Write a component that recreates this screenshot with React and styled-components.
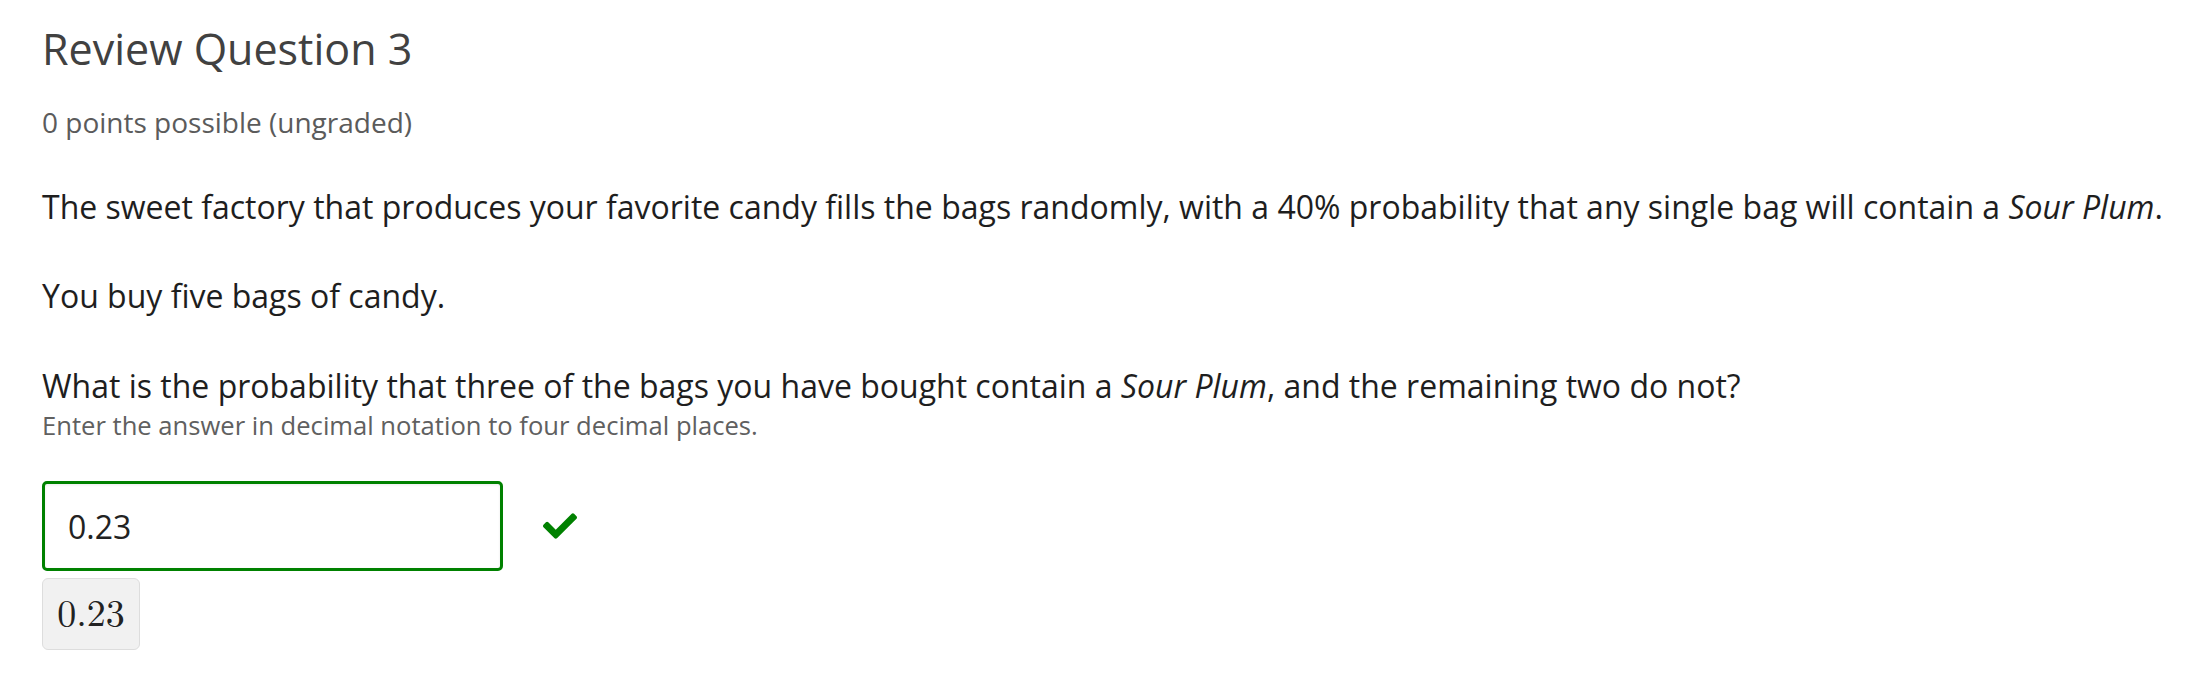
import styled, { createGlobalStyle } from "styled-components";
import { FaCheck } from "react-icons/fa";

const GlobalStyle = createGlobalStyle`
    body {
        margin: 0;
        background: #ffffff;
        font-family: "Open Sans", "Noto Sans", sans-serif;
    }
`

function App() {
    return (
        <>
            <GlobalStyle />
            <DivProblem>
                <H3Title>Review Question 3</H3Title>
                <DivPoints>0 points possible (ungraded)</DivPoints>
                <PText>
                    The sweet factory that produces your favorite candy fills the bags randomly, with a 40% probability that any single bag will contain a <em>Sour Plum</em>.
                </PText>
                <PText>You buy five bags of candy.</PText>
                <LabelQuestion>
                    What is the probability that three of the bags you have bought contain a <em>Sour Plum</em>, and the remaining two do not?
                </LabelQuestion>
                <DivHint>Enter the answer in decimal notation to four decimal places.</DivHint>
                <DivInputRow>
                    <InputAnswer type="text" defaultValue="0.23" />
                    <SpanStatus>
                        <FaCheck size={34} />
                    </SpanStatus>
                </DivInputRow>
                <DivPreview>0.23</DivPreview>
            </DivProblem>
        </>
    );
}

const DivProblem = styled.div`
    padding: 24px 20px 40px 42px;
    color: #1e1e1e;
`

const H3Title = styled.h3`
    margin: 0;
    font-size: 43px;
    line-height: 50px;
    font-weight: 400;
    color: #414141;
`

const DivPoints = styled.div`
    margin-top: 30px;
    font-size: 28px;
    line-height: 36px;
    color: #5b5b5b;
`

const PText = styled.p`
    margin: 45px 0 0 0;
    font-size: 32px;
    line-height: 44px;
`

const LabelQuestion = styled.label`
    display: block;
    margin-top: 46px;
    font-size: 32px;
    line-height: 44px;
`

const DivHint = styled.div`
    font-size: 25.6px;
    line-height: 36px;
    color: #606060;
`

const DivInputRow = styled.div`
    display: flex;
    align-items: center;
    gap: 40px;
    margin-top: 37px;
`

const InputAnswer = styled.input`
    box-sizing: border-box;
    width: 461px;
    height: 90px;
    padding: 0 23px;
    border: 3px solid #008100;
    border-radius: 5px;
    box-shadow: inset 0 1px 3px rgba(0, 0, 0, 0.08);
    font-family: "Open Sans", "Noto Sans", sans-serif;
    font-size: 32px;
    color: #222222;
    background: #ffffff;
    outline: none;
`

const SpanStatus = styled.span`
    display: flex;
    color: #008100;
`

const DivPreview = styled.div`
    box-sizing: border-box;
    display: flex;
    align-items: center;
    justify-content: center;
    width: 98px;
    height: 72px;
    margin-top: 7px;
    background: #f1f1f1;
    border: 1px solid #dddddd;
    border-radius: 6px;
    font-family: "Latin Modern Math", "Liberation Serif", serif;
    font-size: 38px;
    color: #222222;
`

export default App;
